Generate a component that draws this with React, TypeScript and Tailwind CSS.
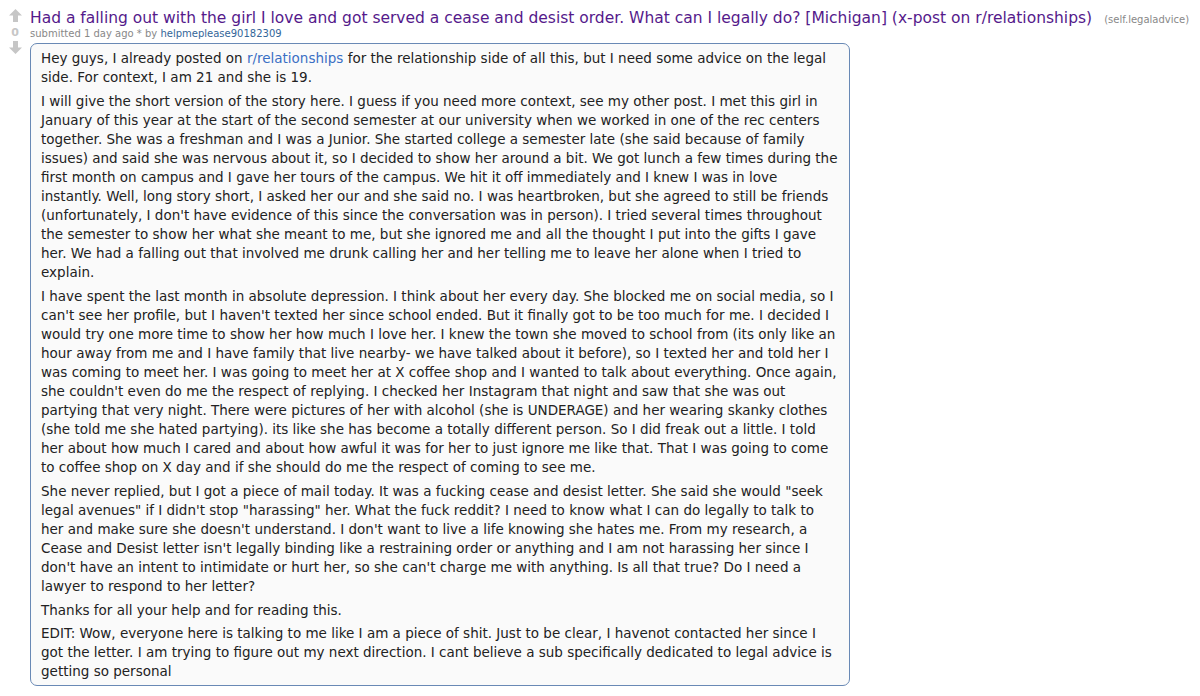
import React from 'react';

const paragraphs: React.ReactNode[] = [
  <>
    Hey guys, I already posted on <span className="text-[#3a6fc4]">r/relationships</span> for the relationship side of all this, but I need some advice on the legal side. For context, I am 21 and she is 19.
  </>,
  "I will give the short version of the story here. I guess if you need more context, see my other post. I met this girl in January of this year at the start of the second semester at our university when we worked in one of the rec centers together. She was a freshman and I was a Junior. She started college a semester late (she said because of family issues) and said she was nervous about it, so I decided to show her around a bit. We got lunch a few times during the first month on campus and I gave her tours of the campus. We hit it off immediately and I knew I was in love instantly. Well, long story short, I asked her our and she said no. I was heartbroken, but she agreed to still be friends (unfortunately, I don't have evidence of this since the conversation was in person). I tried several times throughout the semester to show her what she meant to me, but she ignored me and all the thought I put into the gifts I gave her. We had a falling out that involved me drunk calling her and her telling me to leave her alone when I tried to explain.",
  "I have spent the last month in absolute depression. I think about her every day. She blocked me on social media, so I can't see her profile, but I haven't texted her since school ended. But it finally got to be too much for me. I decided I would try one more time to show her how much I love her. I knew the town she moved to school from (its only like an hour away from me and I have family that live nearby- we have talked about it before), so I texted her and told her I was coming to meet her. I was going to meet her at X coffee shop and I wanted to talk about everything. Once again, she couldn't even do me the respect of replying. I checked her Instagram that night and saw that she was out partying that very night. There were pictures of her with alcohol (she is UNDERAGE) and her wearing skanky clothes (she told me she hated partying). its like she has become a totally different person. So I did freak out a little. I told her about how much I cared and about how awful it was for her to just ignore me like that. That I was going to come to coffee shop on X day and if she should do me the respect of coming to see me.",
  'She never replied, but I got a piece of mail today. It was a fucking cease and desist letter. She said she would "seek legal avenues" if I didn\'t stop "harassing" her. What the fuck reddit? I need to know what I can do legally to talk to her and make sure she doesn\'t understand. I don\'t want to live a life knowing she hates me. From my research, a Cease and Desist letter isn\'t legally binding like a restraining order or anything and I am not harassing her since I don\'t have an intent to intimidate or hurt her, so she can\'t charge me with anything. Is all that true? Do I need a lawyer to respond to her letter?',
  'Thanks for all your help and for reading this.',
  'EDIT: Wow, everyone here is talking to me like I am a piece of shit. Just to be clear, I havenot contacted her since I got the letter. I am trying to figure out my next direction. I cant believe a sub specifically dedicated to legal advice is getting so personal',
];

function Arrow({ down }: { down?: boolean }) {
  return (
    <svg width="15" height="15" viewBox="0 0 15 15" className={down ? 'rotate-180' : ''}>
      <path d="M7.5 1 L14 7.5 L10 7.5 L10 14 L5 14 L5 7.5 L1 7.5 Z" fill="#c6c6c6" />
    </svg>
  );
}

export default function App() {
  return (
    <div className="bg-white w-[1200px] h-[696px] overflow-hidden font-['DejaVu_Sans',Verdana,sans-serif] text-[#222]">
      <div className="flex pt-[7px]">
        <div className="w-[30px] flex flex-col items-center pt-[1px]">
          <Arrow />
          <div className="text-[11px] font-bold text-[#c6c6c6] leading-[14px] mt-[3px]">0</div>
          <Arrow down />
        </div>
        <div className="flex-1 pt-[1px]">
          <div className="flex items-baseline whitespace-nowrap">
            <span className="text-[15.5px] leading-[20px] text-[#551a8b]">
              Had a falling out with the girl I love and got served a cease and desist order. What can I legally do? [Michigan] (x-post on r/relationships)
            </span>
            <span className="ml-[12px] text-[10px] text-[#888]">(self.legaladvice)</span>
          </div>
          <div className="text-[10px] leading-[12px] text-[#888]">
            submitted 1 day ago * by <span className="text-[#369]">helpmeplease90182309</span>
          </div>
          <div className="mt-[3px] w-[820px] bg-[#fafafa] border border-[#6989b5] rounded-[7px] px-[10px] pt-0 pb-0 text-[13.5px] leading-[19px] text-[#222]">
            {paragraphs.map((p, i) => (
              <p key={i} className={i >= 4 ? 'my-[4px]' : 'my-[5px]'}>{p}</p>
            ))}
          </div>
        </div>
      </div>
    </div>
  );
}
